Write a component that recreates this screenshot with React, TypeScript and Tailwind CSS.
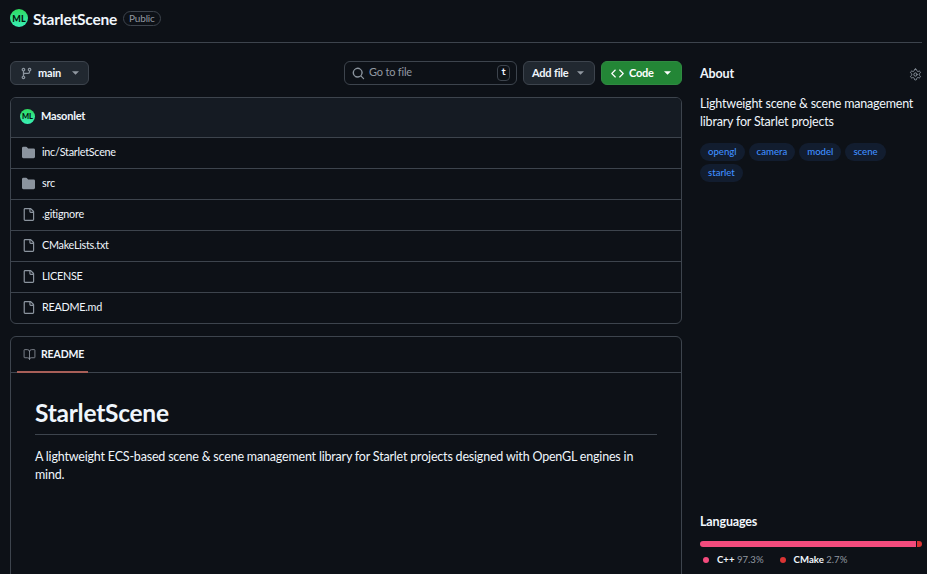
import { BookOpen } from "lucide-react";

const font = { fontFamily: 'Lato, "Noto Sans", sans-serif' };

const files = [
  { name: "inc/StarletScene", dir: true },
  { name: "src", dir: true },
  { name: ".gitignore", dir: false },
  { name: "CMakeLists.txt", dir: false },
  { name: "LICENSE", dir: false },
  { name: "README.md", dir: false },
];

const topics = ["opengl", "camera", "model", "scene", "starlet"];

const Avatar = ({ size, text }: { size: string; text: string }) => (
  <div className={`${size} rounded-full bg-gradient-to-b from-[#2fdc5f] to-[#3aeeb5] flex items-center justify-center overflow-hidden`}>
    <span className={`${text} font-black text-[#03140c] leading-none`}>ML</span>
  </div>
);

const Caret = ({ color }: { color: string }) => (
  <svg width="7" height="4" viewBox="0 0 8 4" className={color} fill="currentColor">
    <path d="M0 0h8L4 4z" />
  </svg>
);

const FolderIcon = () => (
  <svg width="13" height="13" viewBox="0 0 16 16" fill="#8b949e">
    <path d="M1.75 1A1.75 1.75 0 0 0 0 2.75v10.5C0 14.216.784 15 1.75 15h12.5A1.75 1.75 0 0 0 16 13.25v-8.5A1.75 1.75 0 0 0 14.25 3H7.5a.25.25 0 0 1-.2-.1l-.9-1.2C6.07 1.26 5.55 1 5 1H1.75Z" />
  </svg>
);

const FileIcon = () => (
  <svg width="13" height="13" viewBox="0 0 16 16" fill="#8b949e">
    <path d="M2 1.75C2 .784 2.784 0 3.75 0h6.586c.464 0 .909.184 1.237.513l2.914 2.914c.329.328.513.773.513 1.237v9.586A1.75 1.75 0 0 1 13.25 16h-9.5A1.75 1.75 0 0 1 2 14.25Zm1.75-.25a.25.25 0 0 0-.25.25v12.5c0 .138.112.25.25.25h9.5a.25.25 0 0 0 .25-.25V6h-2.75A1.75 1.75 0 0 1 9 4.25V1.5Zm6.75.062V4.25c0 .138.112.25.25.25h2.688l-.011-.013-2.914-2.914-.013-.011Z" />
  </svg>
);

const BranchIcon = () => (
  <svg width="13" height="13" viewBox="0 0 16 16" fill="#8b949e">
    <path d="M9.5 3.25a2.25 2.25 0 1 1 3 2.122V6A2.5 2.5 0 0 1 10 8.5H6a1 1 0 0 0-1 1v1.128a2.251 2.251 0 1 1-1.5 0V5.372a2.25 2.25 0 1 1 1.5 0v1.836A2.493 2.493 0 0 1 6 7h4a1 1 0 0 0 1-1v-.628A2.25 2.25 0 0 1 9.5 3.25Zm-6 0a.75.75 0 1 0 1.5 0 .75.75 0 0 0-1.5 0Zm8.25-.75a.75.75 0 1 0 0 1.5.75.75 0 0 0 0-1.5ZM4.25 12a.75.75 0 1 0 0 1.5.75.75 0 0 0 0-1.5Z" />
  </svg>
);

const SearchIcon = () => (
  <svg width="13" height="13" viewBox="0 0 16 16" fill="#8b949e">
    <path d="M10.68 11.74a6 6 0 0 1-7.922-8.982 6 6 0 0 1 8.982 7.922l3.04 3.04a.749.749 0 1 1-1.06 1.06ZM11.5 7a4.499 4.499 0 1 0-8.997 0A4.499 4.499 0 0 0 11.5 7Z" />
  </svg>
);

const CodeIcon = () => (
  <svg width="13" height="13" viewBox="0 0 16 16" fill="#ffffff">
    <path d="m11.28 3.22 4.25 4.25a.75.75 0 0 1 0 1.06l-4.25 4.25a.749.749 0 1 1-1.06-1.06L13.94 8l-3.72-3.72a.749.749 0 1 1 1.06-1.06Zm-6.56 0a.751.751 0 0 1 1.06 1.06L2.06 8l3.72 3.72a.749.749 0 1 1-1.06 1.06L.47 8.53a.75.75 0 0 1 0-1.06Z" />
  </svg>
);

const GearIcon = () => (
  <svg width="13" height="13" viewBox="0 0 24 24" fill="none" stroke="#8b949e" strokeWidth="1.8" strokeLinecap="round" strokeLinejoin="round">
    <path d="M12.22 2h-.44a2 2 0 0 0-2 2v.18a2 2 0 0 1-1 1.73l-.43.25a2 2 0 0 1-2 0l-.15-.08a2 2 0 0 0-2.73.73l-.22.38a2 2 0 0 0 .73 2.73l.15.1a2 2 0 0 1 1 1.72v.51a2 2 0 0 1-1 1.74l-.15.09a2 2 0 0 0-.73 2.73l.22.38a2 2 0 0 0 2.73.73l.15-.08a2 2 0 0 1 2 0l.43.25a2 2 0 0 1 1 1.73V20a2 2 0 0 0 2 2h.44a2 2 0 0 0 2-2v-.18a2 2 0 0 1 1-1.73l.43-.25a2 2 0 0 1 2 0l.15.08a2 2 0 0 0 2.73-.73l.22-.39a2 2 0 0 0-.73-2.73l-.15-.08a2 2 0 0 1-1-1.74v-.5a2 2 0 0 1 1-1.74l.15-.09a2 2 0 0 0 .73-2.73l-.22-.38a2 2 0 0 0-2.73-.73l-.15.08a2 2 0 0 1-2 0l-.43-.25a2 2 0 0 1-1-1.73V4a2 2 0 0 0-2-2z" />
    <circle cx="12" cy="12" r="3" />
  </svg>
);

export default function App() {
  return (
    <div style={font} className="h-[574px] w-[927px] overflow-hidden bg-[#0d1117] text-[#f0f6fc] pl-[10px] pr-[5px]">
      <header className="h-[43px] border-b border-[#3d444d] flex items-start gap-[5px] pt-[9px]">
        <Avatar size="w-[18px] h-[18px]" text="text-[9px]" />
        <h1 className="text-[15.5px] font-bold leading-[20px] tracking-[-0.2px]">StarletScene</h1>
        <span className="ml-[1px] mt-[2px] h-[15px] px-[5px] rounded-full border border-[#3d444d] text-[10px] tracking-[-0.2px] leading-[13px] text-[#9198a1]">Public</span>
      </header>

      <div className="flex gap-[18px] pt-[18px]">
        <main className="w-[672px] shrink-0">
          <div className="flex items-center h-[24px]">
            <button className="h-[24px] w-[79px] rounded-md border border-[#3d444d] bg-[#212830] flex items-center pl-[9px] gap-[5px] text-[11px] font-bold tracking-[-0.2px]">
              <BranchIcon />
              <span>main</span>
              <span className="ml-[6px]"><Caret color="text-[#9198a1]" /></span>
            </button>
            <div className="ml-auto flex items-center gap-[6px]">
              <div className="w-[173px] h-[24px] rounded-md border border-[#3d444d] flex items-center pl-[7px] pr-[6px] text-[11px] tracking-[-0.2px] text-[#9198a1]">
                <SearchIcon />
                <span className="ml-[4px] -mt-[1px]">Go to file</span>
                <kbd className="ml-auto w-[13px] h-[16px] rounded-[4px] border border-[#3d444d] flex items-center justify-center text-[8px] text-[#f0f6fc] font-bold" style={{ fontFamily: '"DejaVu Sans Mono", monospace' }}>t</kbd>
              </div>
              <button className="w-[72px] h-[24px] rounded-md border border-[#3d444d] bg-[#212830] flex items-center pl-[8px] gap-[9px] text-[11px] font-bold tracking-[-0.2px]">
                <span>Add file</span>
                <Caret color="text-[#9198a1]" />
              </button>
              <button className="w-[81px] h-[24px] rounded-md border border-[#2f8a41] bg-[#238636] flex items-center pl-[9px] text-[11px] font-bold tracking-[-0.2px] text-white">
                <CodeIcon />
                <span className="ml-[5px]">Code</span>
                <span className="ml-[10px]"><Caret color="text-white" /></span>
              </button>
            </div>
          </div>

          <section className="mt-[12px] rounded-md border border-[#3d444d] overflow-hidden">
            <div className="h-[39px] bg-[#151b23] flex items-center pl-[9px] gap-[6px] pb-[2px]">
              <Avatar size="w-[15px] h-[15px]" text="text-[7.5px]" />
              <span className="text-[11px] font-bold tracking-[-0.2px]">Masonlet</span>
            </div>
            {files.map((f) => (
              <div key={f.name} className="h-[31px] border-t border-[#3d444d] flex items-center pl-[11px] gap-[7px] pb-[2px] text-[10.8px] tracking-[-0.25px] leading-none">
                {f.dir ? <FolderIcon /> : <FileIcon />}
                <span>{f.name}</span>
              </div>
            ))}
          </section>

          <section className="mt-[12px] h-[300px] rounded-md border border-[#3d444d]">
            <div className="h-[36px] border-b border-[#3d444d] relative flex items-center pl-[12px] gap-[5px]">
              <BookOpen size={13} strokeWidth={1.5} className="text-[#9198a1]" />
              <span className="text-[10.5px] font-bold tracking-[-0.15px]">README</span>
              <div className="absolute left-[6px] -bottom-[1px] w-[71px] h-[2px] bg-[#a85f58]" />
            </div>
            <article className="px-[24px] pt-[24px]">
              <h2 className="text-[24.5px] font-bold leading-[32px] pb-[5px] border-b border-[#3d444d] tracking-[-0.25px]">StarletScene</h2>
              <p className="mt-[13px] text-[12.5px] leading-[18px] tracking-[-0.19px]">
                A lightweight ECS-based scene &amp; scene management library for Starlet projects designed with OpenGL engines in mind.
              </p>
            </article>
          </section>
        </main>

        <aside className="w-[222px] shrink-0 flex flex-col h-[512px]">
          <div className="flex items-center justify-between h-[24px] pt-[2px]">
            <h3 className="text-[12.5px] font-bold tracking-[-0.15px]">About</h3>
            <GearIcon />
          </div>
          <p className="mt-[10px] text-[12.5px] leading-[18px] tracking-[-0.19px]">Lightweight scene &amp; scene management library for Starlet projects</p>
          <div className="mt-[12px] flex flex-wrap gap-x-[4px] gap-y-[3px] w-[200px]">
            {topics.map((t) => (
              <span key={t} className="h-[18px] px-[8px] rounded-full bg-[#121d2f] text-[#3f8fff] font-medium text-[9.6px] leading-[18px]">{t}</span>
            ))}
          </div>

          <div className="mt-auto mb-[7px]">
            <h3 className="text-[12.5px] font-bold leading-[16px] tracking-[-0.15px]">Languages</h3>
            <div className="mt-[11px] h-[6px] flex gap-[1px] rounded-full overflow-hidden">
              <div className="w-[97.3%] bg-[#f34b7d]" />
              <div className="flex-1 bg-[#da3434]" />
            </div>
            <div className="mt-[7px] flex text-[9.6px] leading-[12px] pl-[3px]">
              <span className="flex items-center gap-[8px] mr-[16px]">
                <span className="w-[6px] h-[6px] rounded-full bg-[#f34b7d]" />
                <span><b className="font-bold">C++</b> <span className="text-[#9198a1]">97.3%</span></span>
              </span>
              <span className="flex items-center gap-[8px]">
                <span className="w-[6px] h-[6px] rounded-full bg-[#da3434]" />
                <span><b className="font-bold">CMake</b> <span className="text-[#9198a1]">2.7%</span></span>
              </span>
            </div>
          </div>
        </aside>
      </div>
    </div>
  );
}
